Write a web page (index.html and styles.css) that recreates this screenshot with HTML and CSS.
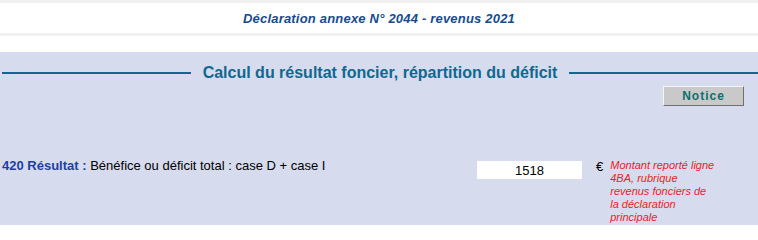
FILE: index.html
```html
<!DOCTYPE html>
<html lang="fr">
<head>
<meta charset="utf-8">
<title>Déclaration annexe N° 2044</title>
<link rel="stylesheet" href="styles.css">
</head>
<body>
<header class="top">
  <h1 class="doc-title">Déclaration annexe N° 2044 - revenus 2021</h1>
</header>
<div class="spacer"></div>
<main class="main">
  <div class="section-head">
    <span class="rule"></span>
    <h2 class="section-title">Calcul du résultat foncier, répartition du déficit</h2>
    <span class="rule"></span>
  </div>
  <div class="actions">
    <button class="notice-btn" type="button">Notice</button>
  </div>
  <div class="row">
    <div class="label"><span class="code">420 Résultat :</span> Bénéfice ou déficit total : case D + case I</div>
    <input class="amount" type="text" value="1518">
    <span class="euro">€</span>
    <span class="note">Montant reporté ligne 4BA, rubrique revenus fonciers de la déclaration principale</span>
  </div>
</main>
</body>
</html>
```
FILE: styles.css
```css
html, body {
  margin: 0;
  padding: 0;
  background: #ffffff;
  font-family: "Liberation Sans", Arial, sans-serif;
}
.top {
  background: #ffffff;
  border-top: 3px solid #f1f1f1;
  border-bottom: 3px solid #f1f1f1;
  height: 30px;
  display: flex;
  align-items: center;
  justify-content: center;
}
.doc-title {
  margin: 0;
  font-size: 13px;
  font-style: italic;
  font-weight: bold;
  color: #174b8e;
  letter-spacing: 0.2px;
}
.spacer {
  height: 16px;
}
.main {
  background: #d6dbee;
  height: 173px;
  padding-top: 10px;
  box-sizing: border-box;
}
.section-head {
  display: flex;
  align-items: center;
  gap: 12px;
  padding-left: 2px;
  height: 21px;
}
.rule {
  flex: 1;
  height: 2px;
  background: #0f6890;
}
.section-title {
  margin: 0;
  font-size: 16px;
  font-weight: bold;
  color: #0f6890;
  white-space: nowrap;
}
.actions {
  display: flex;
  justify-content: flex-end;
  padding-right: 14px;
  margin-top: 3px;
}
.notice-btn {
  width: 81px;
  height: 20px;
  background: #c9c9c9;
  border: 1px solid;
  border-color: #f4f4f4 #707070 #707070 #f4f4f4;
  font-family: "Liberation Sans", Arial, sans-serif;
  font-size: 12px;
  font-weight: bold;
  color: #0f6f6f;
  letter-spacing: 1px;
  padding: 0;
}
.row {
  display: flex;
  align-items: flex-start;
  margin-top: 52px;
  padding-left: 2px;
}
.label {
  width: 475px;
  font-size: 13px;
  color: #000000;
  line-height: 15px;
}
.code {
  font-weight: bold;
  color: #1f3fa0;
}
.amount {
  width: 105px;
  height: 18px;
  box-sizing: border-box;
  border: none;
  background: #ffffff;
  text-align: center;
  font-family: "Liberation Sans", Arial, sans-serif;
  font-size: 13px;
  color: #000000;
  margin-top: 3px;
  padding: 0;
}
.euro {
  margin-left: 14px;
  font-size: 13px;
  line-height: 15px;
  margin-top: 1px;
}
.note {
  margin-left: 7px;
  width: 106px;
  font-size: 11px;
  font-style: italic;
  color: #ee1c25;
  line-height: 13px;
  margin-top: 1px;
}
```
